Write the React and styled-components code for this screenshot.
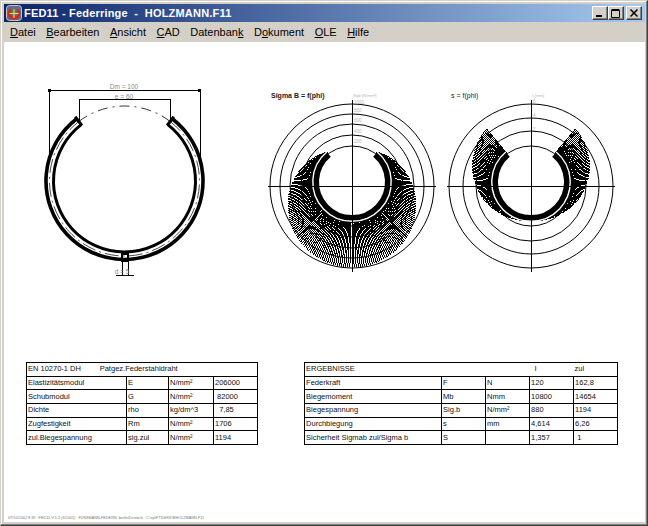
import React from 'react';
import styled, { createGlobalStyle } from 'styled-components';

const GlobalStyle = createGlobalStyle`
  html, body { margin: 0; padding: 0; background: #d4d0c8; }
  #root { width: 648px; height: 526px; }
`;

const Window = styled.div`
  box-sizing: border-box;
  width: 648px;
  height: 526px;
  display: flex;
  flex-direction: column;
  padding: 3px 2px 3px 3px;
  background: #d4d0c8;
  border-top: 1px solid #d4d0c8;
  border-left: 1px solid #d4d0c8;
  border-right: 1px solid #404040;
  border-bottom: 1px solid #404040;
  box-shadow: inset -1px -1px 0 #808080, inset 1px 1px 0 #fff;
  font-family: "Liberation Sans", Arial, sans-serif;
`;

const TitleBar = styled.div`
  flex: 0 0 18px;
  display: flex;
  align-items: center;
  padding-left: 2px;
  background: linear-gradient(90deg, #0a246a, #a6caf0);
  color: #fff;
`;

const TitleText = styled.span`
  margin-left: 2px;
  font: bold 11px "Liberation Sans", Arial, sans-serif;
  letter-spacing: 0.2px;
  white-space: pre;
`;

const WinButtons = styled.div`
  margin-left: auto;
  margin-right: 3px;
  display: flex;
`;

const WinButton = styled.div`
  box-sizing: border-box;
  width: 16px;
  height: 14px;
  margin-left: ${p => (p.$gap ? '2px' : '0')};
  background: #d4d0c8;
  border-top: 1px solid #fff;
  border-left: 1px solid #fff;
  border-right: 1px solid #404040;
  border-bottom: 1px solid #404040;
  box-shadow: inset -1px -1px 0 #808080;
  display: flex;
  align-items: center;
  justify-content: center;
`;

const MenuBar = styled.div`
  flex: 0 0 20px;
  display: flex;
  align-items: center;
  gap: 10.5px;
  padding-left: 6px;
  font-size: 11px;
  color: #000;
`;

const MenuItem = styled.span`
  u { text-underline-offset: 1px; }
`;

const Client = styled.div`
  flex: 1;
  display: flex;
  flex-direction: column;
  padding: 33px 0 0 0;
  background: #fff;
  min-height: 0;
`;

const Charts = styled.div`
  display: flex;
  height: 205px;
`;

const Drawing = styled.svg`
  display: block;
  flex: none;
  margin-left: ${p => p.$left}px;
`;

const Tables = styled.div`
  display: flex;
  gap: 46px;
  margin-top: 82px;
  padding-left: 22px;
`;

const DataTable = styled.table`
  width: ${p => p.$width}px;
  height: 83px;
  table-layout: fixed;
  border-collapse: collapse;
  font: 7.5px "Liberation Sans", Arial, sans-serif;
  color: #111;
  td {
    box-sizing: border-box;
    border: 1px solid #000;
    padding: 0 0 0 1px;
    height: 13.6px;
    line-height: 10px;
    overflow: hidden;
  }
`;

const Footer = styled.div`
  margin-top: auto;
  margin-bottom: 1px;
  padding-left: 4px;
  height: 6px;
  font: 3.8px/6px "Liberation Sans", Arial, sans-serif;
  color: #777;
  white-space: nowrap;
`;

const GrayLabel = styled.text`
  font-family: "Liberation Sans", Arial, sans-serif;
  fill: ${p => (p.$light ? '#b4b4b4' : '#8a8a8a')};
`;

const ChartTitle = styled.text`
  font-family: "Liberation Sans", Arial, sans-serif;
  font-size: 7px;
  font-weight: ${p => (p.$bold ? 'bold' : 'normal')};
  fill: #222;
`;

const rad = d => (d * Math.PI) / 180;

// phi is counted from the top of the ring, clockwise
const polar = (cx, cy, r, phi) => [cx + r * Math.sin(rad(phi)), cy - r * Math.cos(rad(phi))];

const arcPath = (cx, cy, r, from, to) => {
  const [x1, y1] = polar(cx, cy, r, from);
  const [x2, y2] = polar(cx, cy, r, to);
  return `M${x1} ${y1}A${r} ${r} 0 ${to - from > 180 ? 1 : 0} 1 ${x2} ${y2}`;
};

function AppIcon() {
  return (
    <svg width="16" height="16" viewBox="0 0 16 16">
      <rect x="0.5" y="0.5" width="15" height="15" rx="3" fill="#5f6f86" stroke="#c4c4bc" />
      <path d={arcPath(8, 8.5, 5, 40, 320)} fill="none" stroke="#d8261c" strokeWidth="2.6" />
      <path d="M3.5 8.5h9M8 4v9" stroke="#f4e82c" strokeWidth="1" />
    </svg>
  );
}

function RingDrawing() {
  const cx = 124.5;
  const cy = 181;
  const end = 37.5;
  const [ax, ay] = polar(cx, cy, 70, -end);
  const [bx, by] = polar(cx, cy, 81, -end);
  const [cx2, cy2] = polar(cx, cy, 70, end);
  const [dx, dy] = polar(cx, cy, 81, end);
  return (
    <Drawing $left={36} width="175" height="205" viewBox="40 75 175 205">
      <g fill="none" stroke="#000">
        <path d={arcPath(cx, cy, 78.5, end, 360 - end)} strokeWidth="3.6" />
        <path d={arcPath(cx, cy, 71, end, 360 - end)} strokeWidth="3" />
        <path d={arcPath(cx, cy, 75, end, 360 - end)} strokeWidth="0.7" strokeDasharray="14 4 2 4" />
        <path d={arcPath(cx, cy, 75, -end, end)} strokeWidth="0.8" strokeDasharray="10 5 2 5" />
        <path d={`M${ax} ${ay}L${bx} ${by}M${cx2} ${cy2}L${dx} ${dy}`} strokeWidth="3" />
      </g>
      <g fill="none" stroke="#000" strokeWidth="1" shapeRendering="crispEdges">
        <path d="M49.5 156V90.5H200.5V156" />
        <path d="M79.5 120V99.5H170.5V120" />
        <path d="M122.5 262V275M128.5 262V275M116 275.5H134" />
        <rect x="122" y="254" width="6" height="7" strokeWidth="2" />
      </g>
      <rect x="48" y="89" width="3" height="3" fill="#000" />
      <rect x="198" y="89" width="3" height="3" fill="#000" />
      <GrayLabel x="124" y="89" textAnchor="middle" fontSize="6.5">Dm = 100</GrayLabel>
      <GrayLabel x="124" y="98.5" textAnchor="middle" fontSize="6.5">e = 60</GrayLabel>
      <GrayLabel x="122" y="274" textAnchor="middle" fontSize="6.5">d = 5</GrayLabel>
    </Drawing>
  );
}

function PolarChart({ left, x0, cx, radii, title, titleX, bold, unit, ticks, hatch }) {
  const cy = 186;
  const ringY = 182;
  const tip = 40;
  const lines = [];
  for (let phi = tip; phi <= 360 - tip; phi += 1.4) {
    const r = hatch(phi);
    const [x1, y1] = polar(cx, ringY, 37, phi);
    const [x2, y2] = polar(cx, ringY, 39.5 + r, phi);
    lines.push(`M${x1.toFixed(1)} ${y1.toFixed(1)}L${x2.toFixed(1)} ${y2.toFixed(1)}`);
  }
  return (
    <Drawing $left={left} width="180" height="205" viewBox={`${x0} 75 180 205`}>
      <g fill="none" stroke="#000" strokeWidth="1">
        {radii.map(r => (
          <circle key={r} cx={cx} cy={cy} r={r} />
        ))}
        <path d={lines.join('')} shapeRendering="crispEdges" />
        <path d={arcPath(cx, ringY, 39.2, tip, 360 - tip)} stroke="#fff" strokeWidth="1.4" />
        <path d={arcPath(cx, ringY, 35.5, tip, 360 - tip)} strokeWidth="5" />
        <path d={`M${cx - 84.5} ${cy + 0.5}H${cx + 83.5}M${cx + 0.5} 100V272`} shapeRendering="crispEdges" />
      </g>
      <ChartTitle x={titleX} y="98" $bold={bold}>{title}</ChartTitle>
      <GrayLabel x={cx + 1} y="97" fontSize="4" $light>{unit}</GrayLabel>
      {ticks.map(t => (
        <GrayLabel key={t.label} x={cx + 2} y={t.y} fontSize="4.5" $light>{t.label}</GrayLabel>
      ))}
    </Drawing>
  );
}

// stress grows away from the gap, deflection shrinks towards the back of the ring
const sigmaHatch = phi => {
  const c = Math.cos(rad(40));
  return (46 * (c - Math.cos(rad(phi)))) / (1 + c);
};
const deflectionHatch = phi => {
  const c = Math.cos(rad(40));
  return (30 * (1 + Math.cos(rad(phi)))) / (1 + c);
};

const materialRows = [
  ['Elastizitätsmodul', 'E', 'N/mm²', '206000'],
  ['Schubmodul', 'G', 'N/mm²', ' 82000'],
  ['Dichte', 'rho', 'kg/dm^3', '  7,85'],
  ['Zugfestigkeit', 'Rm', 'N/mm²', '1706'],
  ['zul.Biegespannung', 'sig.zul', 'N/mm²', '1194'],
];

const resultRows = [
  ['Federkraft', 'F', 'N', '120', '162,8'],
  ['Biegemoment', 'Mb', 'Nmm', '10800', '14654'],
  ['Biegespannung', 'Sig.b', 'N/mm²', '880', '1194'],
  ['Durchbiegung', 's', 'mm', '4,614', '6,26'],
  ['Sicherheit Sigmab zul/Sigma b', 'S', '', '1,357', ' 1'],
];

const Cell = styled.td`
  white-space: pre;
  ${p => p.$noLeft && 'border-left: none !important;'}
  ${p => p.$noRight && 'border-right: none !important;'}
`;

export default function App() {
  return (
    <Window>
      <GlobalStyle />
      <TitleBar>
        <AppIcon />
        <TitleText>FED11 - Federringe  -  HOLZMANN.F11</TitleText>
        <WinButtons>
          <WinButton>
            <svg width="8" height="8" viewBox="0 0 8 8"><path d="M0 6h6v2H0z" fill="#000" /></svg>
          </WinButton>
          <WinButton>
            <svg width="10" height="9" viewBox="0 0 10 9"><path d="M.5 1.5h8v7h-8zM.5 .5h8" fill="none" stroke="#000" /></svg>
          </WinButton>
          <WinButton $gap>
            <svg width="8" height="8" viewBox="0 0 8 8"><path d="M.5 .5l7 7M7.5 .5l-7 7" stroke="#000" strokeWidth="1.5" /></svg>
          </WinButton>
        </WinButtons>
      </TitleBar>
      <MenuBar>
        <MenuItem><u>D</u>atei</MenuItem>
        <MenuItem><u>B</u>earbeiten</MenuItem>
        <MenuItem><u>A</u>nsicht</MenuItem>
        <MenuItem><u>C</u>AD</MenuItem>
        <MenuItem>Datenban<u>k</u></MenuItem>
        <MenuItem>D<u>o</u>kument</MenuItem>
        <MenuItem><u>O</u>LE</MenuItem>
        <MenuItem><u>H</u>ilfe</MenuItem>
      </MenuBar>
      <Client>
        <Charts>
          <RingDrawing />
          <PolarChart
            left={47}
            x0={262}
            cx={352}
            radii={[82, 72, 62, 51, 40]}
            title="Sigma B = f(phi)"
            titleX={271}
            bold
            unit="Sigb [N/mm²]"
            ticks={[
              { label: '1000', y: 104 },
              { label: '800', y: 112 },
              { label: '600', y: 122 },
              { label: '400', y: 133 },
              { label: '200', y: 143 },
            ]}
            hatch={sigmaHatch}
          />
          <PolarChart
            left={0}
            x0={442}
            cx={531}
            radii={[82, 68, 55, 40]}
            title="s = f(phi)"
            titleX={451}
            unit="s [mm]"
            ticks={[
              { label: '8', y: 103 },
              { label: '4', y: 117 },
              { label: '2', y: 131 },
            ]}
            hatch={deflectionHatch}
          />
        </Charts>
        <Tables>
          <DataTable $width={231}>
            <colgroup>
              <col style={{ width: 100 }} />
              <col style={{ width: 42 }} />
              <col style={{ width: 45 }} />
              <col style={{ width: 44 }} />
            </colgroup>
            <tbody>
              <tr>
                <Cell colSpan={4}>EN 10270-1 DH         Patgez.Federstahldraht</Cell>
              </tr>
              {materialRows.map(row => (
                <tr key={row[0]}>
                  {row.map((cell, i) => <Cell key={i}>{cell}</Cell>)}
                </tr>
              ))}
            </tbody>
          </DataTable>
          <DataTable $width={313}>
            <colgroup>
              <col style={{ width: 137 }} />
              <col style={{ width: 44 }} />
              <col style={{ width: 44 }} />
              <col style={{ width: 44 }} />
              <col style={{ width: 44 }} />
            </colgroup>
            <tbody>
              <tr>
                <Cell colSpan={3} $noRight>ERGEBNISSE</Cell>
                <Cell $noLeft $noRight>  l</Cell>
                <Cell $noLeft>zul</Cell>
              </tr>
              {resultRows.map(row => (
                <tr key={row[0]}>
                  {row.map((cell, i) => <Cell key={i}>{cell}</Cell>)}
                </tr>
              ))}
            </tbody>
          </DataTable>
        </Tables>
        <Footer>07/20/2002 8:39 : FED11 V 1.2 (6/2001) : FÜSSMANN-FEDERN, berlin/Destock : C:\sp\FT\DEKK\EHOLZMANN.F11</Footer>
      </Client>
    </Window>
  );
}
